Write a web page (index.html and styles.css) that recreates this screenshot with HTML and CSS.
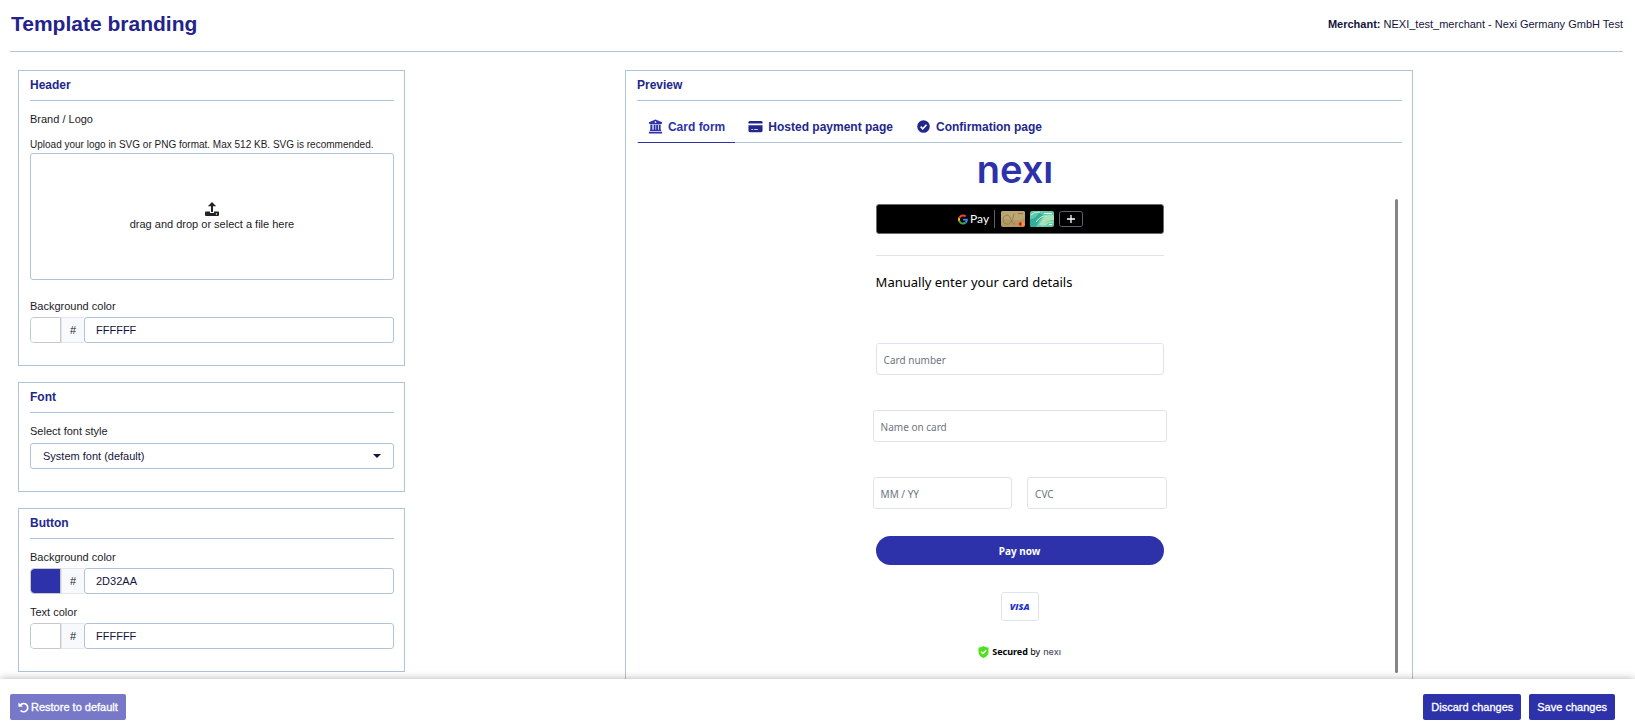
FILE: index.html
```html
<!DOCTYPE html>
<html lang="en">
<head>
    <meta charset="UTF-8">
    <meta name="viewport" content="width=device-width, initial-scale=1.0">
    <title>Template branding</title>
    <link rel="stylesheet" href="styles.css">
</head>
<body>
    <header class="page-header">
        <h1>Template branding</h1>
        <p class="merchant"><strong>Merchant:</strong> NEXI_test_merchant - Nexi Germany GmbH Test</p>
    </header>

    <main class="content">
        <form class="settings" id="brandingForm">
            <section class="card">
                <h2>Header</h2>
                <p class="label">Brand / Logo</p>
                <p class="label hint" id="logoHint">Upload your logo in SVG or PNG format. Max 512 KB. SVG is recommended.</p>
                <button type="button" class="dropzone" aria-describedby="logoHint">
                    <svg class="upload-icon" viewBox="0 0 14 14">
                        <path d="M7 0 11.200 4.200H8V10H6V4.200H2.800Z"/>
                        <path d="M1 9.500H5V11H9V9.500H13Q14 9.500 14 10.500V13Q14 14 13 14H1Q0 14 0 13V10.500Q0 9.500 1 9.500Z"/>
                        <circle cx="11.500" cy="12" r="0.700" fill="#fff"/>
                    </svg>
                    <span>drag and drop or select a file here</span>
                </button>
                <label class="label label-spaced" for="headerBg">Background color</label>
                <div class="color-row">
                    <input type="color" class="swatch" value="#ffffff" aria-label="Pick header background color">
                    <span class="hash">#</span>
                    <input type="text" class="hex" id="headerBg" value="FFFFFF">
                </div>
            </section>

            <section class="card">
                <h2>Font</h2>
                <label class="label" for="fontStyle">Select font style</label>
                <div class="select-wrap">
                    <select id="fontStyle">
                        <option>System font (default)</option>
                    </select>
                    <span class="caret"></span>
                </div>
            </section>

            <section class="card">
                <h2>Button</h2>
                <label class="label" for="buttonBg">Background color</label>
                <div class="color-row">
                    <input type="color" class="swatch" value="#2d32aa" aria-label="Pick button background color">
                    <span class="hash">#</span>
                    <input type="text" class="hex" id="buttonBg" value="2D32AA">
                </div>
                <label class="label" for="buttonText">Text color</label>
                <div class="color-row">
                    <input type="color" class="swatch" value="#ffffff" aria-label="Pick button text color">
                    <span class="hash">#</span>
                    <input type="text" class="hex" id="buttonText" value="FFFFFF">
                </div>
            </section>
        </form>

        <section class="card preview">
            <h2>Preview</h2>
            <nav class="tabs">
                <button type="button" class="tab active">
                    <svg viewBox="0 0 16 16">
                        <path fill-rule="evenodd" d="M8 0.500 15 3.500V5H14V5.500H2V5H1V3.500ZM8 2.300A1 1 0 1 0 8 4.300A1 1 0 1 0 8 2.300Z"/>
                        <path d="M2.500 6.200H4.700V11.500H6V6.200H8V11.500H8.700V6.200H10.700V11.500H11.500V6.200H13.500V11.500H14V12.800H2V11.500H2.500ZM1 13.600H15V15.500H1Z"/>
                    </svg>
                    Card form
                </button>
                <button type="button" class="tab">
                    <svg viewBox="0 0 16 16">
                        <path d="M2 2H14Q15.500 2 15.500 3.500V4.700H0.500V3.500Q0.500 2 2 2Z"/>
                        <path fill-rule="evenodd" d="M0.500 6.700H15.500V12.500Q15.500 14 14 14H2Q0.500 14 0.500 12.500ZM3.500 10.700V11.500H5.500V10.700ZM6.500 10.700V11.500H10.500V10.700Z"/>
                    </svg>
                    Hosted payment page
                </button>
                <button type="button" class="tab">
                    <svg viewBox="0 0 16 16">
                        <circle cx="8" cy="8" r="6.700"/>
                        <path d="M5 8.200 7.200 10.400 11.200 6.200" fill="none" stroke="#fff" stroke-width="1.700"/>
                    </svg>
                    Confirmation page
                </button>
            </nav>

            <div class="preview-body">
                <div class="checkout">
                    <svg class="brand" viewBox="0 0 76 22" role="img" aria-label="nexi">
                        <text x="38" y="21" text-anchor="middle">nexı</text>
                    </svg>

                    <button type="button" class="gpay" aria-label="Google Pay">
                        <svg class="g-logo" viewBox="0 0 48 48">
                            <path fill="#ea4335" d="M24 9.500c3.500 0 6.700 1.200 9.200 3.600l6.900-6.900C35.900 2.400 30.500 0 24 0 14.600 0 6.500 5.400 2.600 13.200l8 6.200C12.400 13.700 17.700 9.500 24 9.500z"/>
                            <path fill="#4285f4" d="M47 24.600c0-1.600-.2-3.100-.4-4.600H24v9h12.900c-.6 3-2.300 5.500-4.700 7.200l7.700 6C44.400 38 47 31.800 47 24.600z"/>
                            <path fill="#fbbc05" d="M10.500 28.600c-.5-1.500-.8-3-.8-4.600s.3-3.100.8-4.600l-8-6.200C1 16.500 0 20.100 0 24s.9 7.500 2.600 10.800z"/>
                            <path fill="#34a853" d="M24 48c6.500 0 11.900-2.100 15.900-5.800l-7.700-6c-2.200 1.500-4.900 2.300-8.200 2.300-6.300 0-11.600-4.200-13.500-9.900l-8 6.200C6.500 42.600 14.600 48 24 48z"/>
                        </svg>
                        <span class="pay-word">Pay</span>
                        <span class="pay-divider"></span>
                        <svg class="mini-card" viewBox="0 0 24 16">
                            <rect width="24" height="16" rx="2" fill="#b39a63"/>
                            <path d="M0 10C6 5 12 13 24 7V2Q24 0 22 0H2Q0 0 0 2Z" fill="#bda671"/>
                            <path d="M13 3C11 12 8 14 5 13 0 11 2 4 6 4 10 4 10 13 14 13" fill="none" stroke="#94804d"/>
                            <path d="M17 2.500H22" stroke="#8b774a"/>
                            <circle cx="19.500" cy="13" r="1.700" fill="#eb001b"/>
                            <circle cx="22" cy="13" r="1.700" fill="#f79e1b"/>
                        </svg>
                        <svg class="mini-card" viewBox="0 0 24 16">
                            <rect width="24" height="16" rx="2" fill="#62c9ad"/>
                            <path d="M0 8Q5 8 9 2L13 4Q9 9 6 16H2Q0 16 0 14Z" fill="#2fae9c"/>
                            <path d="M9 14Q13 5 18 4T24 5V9Q17 8 14 15Z" fill="#a8e2b8"/>
                            <path d="M1 4Q5 0 10 1M6 11Q11 4 17 5M15 14Q18 10 23 11" fill="none" stroke="#d8f0bd"/>
                            <path d="M14 2.500H22M19 13.500H22" stroke="#eafff5"/>
                        </svg>
                        <svg class="mini-card" viewBox="0 0 24 16">
                            <rect x="0.500" y="0.500" width="23" height="15" rx="2" fill="none" stroke="#5f6368"/>
                            <path d="M12 4V12M8 8H16" stroke="#fff" stroke-width="1.300"/>
                        </svg>
                    </button>

                    <hr class="separator">
                    <h3>Manually enter your card details</h3>
                    <input type="text" class="field" placeholder="Card number" aria-label="Card number">
                    <div class="field-group">
                        <input type="text" class="field" placeholder="Name on card" aria-label="Name on card">
                        <div class="field-pair">
                            <input type="text" class="field" placeholder="MM / YY" aria-label="Expiry date">
                            <input type="text" class="field" placeholder="CVC" aria-label="CVC">
                        </div>
                    </div>
                    <button type="button" class="pay-now">Pay now</button>
                    <div class="visa">VISA</div>
                    <p class="secured">
                        <svg class="shield" viewBox="0 0 11 12">
                            <path d="M5.500 0Q8 1.500 10.500 1.500V6Q10.500 10 5.500 12 0.500 10 0.500 6V1.500Q3 1.500 5.500 0Z" fill="#4be31c"/>
                            <path d="M3 5.700 5 7.500 8.200 4.200" fill="none" stroke="#fff" stroke-width="1.400"/>
                        </svg>
                        <span><strong>Secured</strong> by</span>
                        <span class="nexi-small">nexı</span>
                    </p>
                </div>
                <div class="scrollbar"></div>
            </div>
        </section>
    </main>

    <footer class="actions">
        <button type="button" class="btn btn-muted">
            <svg viewBox="0 0 12 12">
                <path d="M2.500 3.500A4.500 4.500 0 1 1 2.800 9.200" fill="none" stroke="#fff" stroke-width="1.800"/>
                <path d="M0.500 0.500V5.300H5.300Z" fill="#fff"/>
            </svg>
            Restore to default
        </button>
        <button type="button" class="btn btn-first">Discard changes</button>
        <button type="submit" form="brandingForm" class="btn">Save changes</button>
    </footer>
</body>
</html>
```
FILE: styles.css
```css
* {
    box-sizing: border-box;
}

body {
    margin: 0;
    height: 100vh;
    display: flex;
    flex-direction: column;
    background-color: #fff;
    color: #1b1b1f;
    font-family: "Liberation Sans", Arial, sans-serif;
    font-size: 11px;
    line-height: 16px;
}

h1, h2, h3, p {
    margin: 0;
}

input, select, button {
    font: inherit;
    color: inherit;
    margin: 0;
}

button {
    cursor: pointer;
}

/* Page header */
.page-header {
    display: flex;
    justify-content: space-between;
    align-items: center;
    flex: none;
    margin: 0 12px 0 10px;
    padding: 0 0 4px 1px;
    height: 52px;
    border-bottom: 1px solid #b0c4d9;
}

h1 {
    font-size: 21px;
    line-height: 28px;
    color: #23238c;
}

.merchant {
    color: #14143c;
}

.content {
    flex: 1;
    min-height: 0;
    overflow: hidden;
    padding: 18px 18px 0;
    display: grid;
    grid-template-columns: 24.2% 49.3%;
    column-gap: 220px;
    align-items: start;
}

.settings {
    display: flex;
    flex-direction: column;
    gap: 16px;
}

.card {
    border: 1px solid #b0c4d9;
    padding: 0 10px 22px 11px;
}

h2 {
    font-size: 12px;
    line-height: 29px;
    color: #23278c;
    border-bottom: 1px solid #b0c4d9;
}

.label {
    display: block;
    margin-top: 10px;
}

.label-spaced {
    margin-top: 18px;
}

.hint {
    font-size: 10px;
    white-space: nowrap;
}

.dropzone {
    width: 100%;
    height: 127px;
    display: flex;
    flex-direction: column;
    align-items: center;
    justify-content: center;
    background: none;
    border: 1px solid #b0c4d9;
    border-radius: 3px;
}

.upload-icon {
    width: 14px;
    height: 14px;
    fill: #212529;
}

.color-row {
    display: flex;
    height: 26px;
    margin-top: 3px;
}

.swatch {
    appearance: none;
    width: 31px;
    height: 26px;
    padding: 0;
    background: none;
    border: 1px solid #c8c8c8;
    border-radius: 4px 0 0 4px;
}

.swatch::-webkit-color-swatch-wrapper {
    padding: 0;
}

.swatch::-webkit-color-swatch {
    border: none;
    border-radius: 3px 0 0 3px;
}

.hash {
    width: 23px;
    line-height: 24px;
    text-align: center;
    background-color: #f8f9fd;
    border: 1px solid #e2e5ea;
    border-right: none;
}

.hex {
    flex: 1;
    min-width: 0;
    padding: 0 11px;
    color: #14143c;
    border: 1px solid #b0c4d9;
    border-radius: 3px;
}

.select-wrap {
    display: grid;
    align-items: center;
    margin-top: 4px;
}

.select-wrap select, .caret {
    grid-area: 1 / 1;
}

select {
    appearance: none;
    height: 26px;
    padding: 0 12px;
    color: #14143c;
    background-color: #fff;
    border: 1px solid #b0c4d9;
    border-radius: 3px;
}

.caret {
    justify-self: end;
    margin-right: 13px;
    border: 4px solid transparent;
    border-top-color: #14143c;
    border-bottom: none;
    pointer-events: none;
}

/* Preview */
.tabs {
    display: flex;
    gap: 3px;
    margin-top: 12px;
    padding-left: 1px;
    border-bottom: 1px solid #b0c4d9;
}

.tab {
    display: flex;
    align-items: center;
    gap: 5px;
    height: 30px;
    margin-bottom: -1px;
    padding: 0 10px 2px;
    color: #23278c;
    font-size: 12px;
    font-weight: bold;
    white-space: nowrap;
    background: none;
    border: none;
    border-bottom: 1px solid transparent;
}

.tab.active {
    color: #2d32aa;
    border-bottom-color: #2d32aa;
}

.tab svg {
    width: 15px;
    height: 15px;
    fill: currentColor;
}

.preview-body {
    display: grid;
    grid-template-columns: 1fr 288px 1fr;
    padding-top: 19px;
}

.checkout {
    grid-column: 2;
    display: flex;
    flex-direction: column;
    align-items: stretch;
    font-family: "Noto Sans", "Open Sans", sans-serif;
}

.scrollbar {
    justify-self: end;
    width: 3px;
    height: 474px;
    margin: 37px 4px 0 0;
    background-color: #858585;
    border-radius: 2px;
}

.brand {
    align-self: center;
    width: 76px;
    height: 22px;
    margin-right: 10px;
    overflow: visible;
}

.brand text {
    font-family: Inter, sans-serif;
    font-size: 38px;
    font-weight: 600;
    fill: #2d32aa;
}

.gpay {
    display: flex;
    align-items: center;
    justify-content: center;
    height: 30px;
    margin-top: 20px;
    padding: 0 0 0 2px;
    background-color: #000;
    border: 1px solid #6b6b6b;
    border-radius: 3px;
}

.g-logo {
    width: 10px;
    height: 11px;
}

.pay-word {
    margin-left: 2px;
    color: #fff;
    font-family: Lato, sans-serif;
    font-size: 12px;
}

.pay-divider {
    width: 1px;
    height: 18px;
    margin: 0 1px 0 5px;
    background-color: #5f6368;
}

.mini-card {
    width: 24px;
    height: 16px;
    margin-left: 5px;
}

.separator {
    width: 100%;
    margin: 21px 0 0;
    border: none;
    border-top: 1px solid #e3e3e6;
}

h3 {
    margin: 16px 0 51px;
    color: #000;
    font-size: 13px;
    font-weight: normal;
    line-height: 20px;
}

.field {
    width: 100%;
    min-width: 0;
    height: 32px;
    padding: 1px 7px 0;
    font-size: 10px;
    background-color: #fff;
    border: 1px solid #dfe3ee;
    border-radius: 3px;
}

.field::placeholder {
    color: #6e7580;
    opacity: 1;
}

.field-group {
    margin: 35px -3px 0;
}

.field-pair {
    display: grid;
    grid-template-columns: 1fr 1fr;
    gap: 15px;
    margin-top: 35px;
}

.pay-now {
    height: 29px;
    margin-top: 27px;
    color: #fff;
    font-size: 10px;
    font-weight: bold;
    background-color: #2d32aa;
    border: none;
    border-radius: 15px;
}

.visa {
    align-self: center;
    width: 38px;
    height: 29px;
    margin-top: 27px;
    color: #1a34cf;
    font-family: "Open Sans", sans-serif;
    font-size: 9px;
    font-style: italic;
    font-weight: 800;
    line-height: 27px;
    text-align: center;
    border: 1px solid #dfe3ee;
    border-radius: 3px;
}

.secured {
    display: flex;
    align-items: center;
    justify-content: center;
    gap: 3px;
    margin-top: 23px;
    color: #000;
    font-size: 9px;
}

.shield {
    width: 11px;
    height: 12px;
}

.nexi-small {
    color: #4a5068;
    font-family: Inter, sans-serif;
    font-weight: 500;
}

/* Footer actions */
.actions {
    position: relative;
    flex: none;
    display: flex;
    gap: 8px;
    padding: 15px 20px 4px 10px;
    background-color: #fff;
    box-shadow: 0 0 8px rgba(0, 0, 0, 0.3);
}

.btn {
    display: flex;
    align-items: center;
    gap: 2px;
    height: 26px;
    padding: 0 8px;
    color: #fff;
    white-space: nowrap;
    -webkit-text-stroke: 0.3px #fff;
    background-color: #2d32aa;
    border: none;
    border-radius: 2px;
}

.btn svg {
    width: 11px;
    height: 11px;
}

.btn-muted {
    background-color: #7779c8;
}

.btn-first {
    margin-left: auto;
}
```
